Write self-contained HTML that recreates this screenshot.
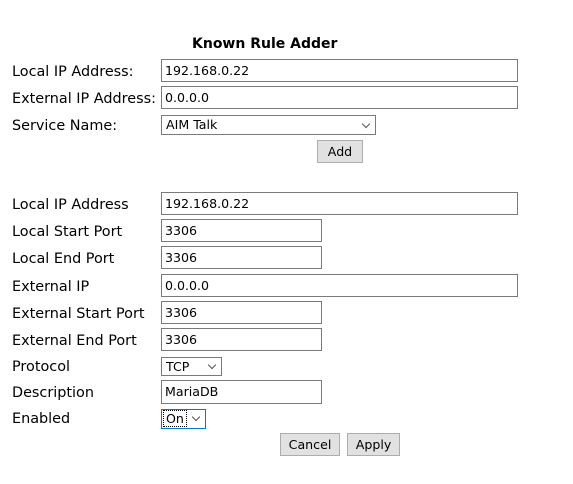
<!DOCTYPE html>
<html><head><style>
html,body{margin:0;padding:0;background:#fff;width:573px;height:484px;overflow:hidden;font-family:"DejaVu Sans",Verdana,sans-serif;color:#000}
.l{position:absolute;left:12px;font-size:14.4px;line-height:17px}
.b{position:absolute;box-sizing:border-box;border:1px solid #7a7a7a;background:#fff;font-size:12.6px;line-height:18px;padding-left:3px}
.s{position:absolute;box-sizing:border-box;border:1px solid #7a7a7a;background:#fff;font-size:12.6px;padding-left:4px}
.s i{position:absolute;right:6px;top:4px;width:5px;height:5px;border-right:1px solid #555;border-bottom:1px solid #555;transform:rotate(45deg)}
.btn{position:absolute;box-sizing:border-box;border:1px solid #adadad;background:#e1e1e1;font-size:12.6px;text-align:center}
</style></head><body>
<div style="position:absolute;left:192px;top:36px;font-weight:bold;font-size:14px">Known Rule Adder</div>
<div class="l" style="top:64px">Local IP Address:</div>
<div class="b" style="left:161px;top:59px;width:357px;height:23px;line-height:21px">192.168.0.22</div>
<div class="l" style="top:91px">External IP Address:</div>
<div class="b" style="left:161px;top:86px;width:357px;height:23px;line-height:21px">0.0.0.0</div>
<div class="l" style="top:118px">Service Name:</div>
<div class="s" style="left:161px;top:115px;width:215px;height:20px;line-height:18px">AIM Talk<i style="top:5px"></i></div>
<div class="btn" style="left:317px;top:140px;width:46px;height:23px;line-height:21px">Add</div>

<div class="l" style="top:197px">Local IP Address</div>
<div class="b" style="left:161px;top:192px;width:357px;height:23px;line-height:21px">192.168.0.22</div>
<div class="l" style="top:224px">Local Start Port</div>
<div class="b" style="left:161px;top:219px;width:161px;height:23px;line-height:21px">3306</div>
<div class="l" style="top:251px">Local End Port</div>
<div class="b" style="left:161px;top:246px;width:161px;height:23px;line-height:21px">3306</div>
<div class="l" style="top:279px">External IP</div>
<div class="b" style="left:161px;top:274px;width:357px;height:23px;line-height:21px">0.0.0.0</div>
<div class="l" style="top:306px">External Start Port</div>
<div class="b" style="left:161px;top:301px;width:161px;height:23px;line-height:21px">3306</div>
<div class="l" style="top:333px">External End Port</div>
<div class="b" style="left:161px;top:328px;width:161px;height:23px;line-height:21px">3306</div>
<div class="l" style="top:359px">Protocol</div>
<div class="s" style="left:161px;top:357px;width:61px;height:19px;line-height:17px">TCP<i></i></div>
<div class="l" style="top:385px">Description</div>
<div class="b" style="left:161px;top:380px;width:161px;height:24px;line-height:22px">MariaDB</div>
<div class="l" style="top:411px">Enabled</div>
<div class="s" style="left:161px;top:409px;width:45px;height:20px;line-height:18px;border-color:#0078d7;padding-left:2px"><span style="outline:1px dotted #000;padding:0 2px">On</span><i></i></div>
<div class="btn" style="left:280px;top:433px;width:60px;height:23px;line-height:21px">Cancel</div>
<div class="btn" style="left:347px;top:433px;width:53px;height:23px;line-height:21px">Apply</div>
</body></html>
